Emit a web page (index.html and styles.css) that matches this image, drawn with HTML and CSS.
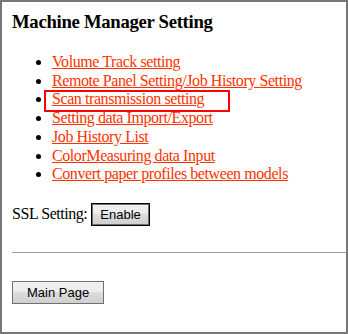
FILE: index.html
```html
<!DOCTYPE html>
<html lang="en">
<head>
  <meta charset="UTF-8">
  <title>Machine Manager Setting</title>
  <link rel="stylesheet" href="styles.css">
</head>
<body>

  <div class="frame">
    <h2>Machine Manager Setting</h2>

    <ul class="menu">
      <li><a href="#">Volume Track setting</a></li>
      <li><a href="#">Remote Panel Setting/Job History Setting</a></li>
      <li class="marked"><a href="#">Scan transmission setting</a><span class="mark"></span></li>
      <li><a href="#">Setting data Import/Export</a></li>
      <li><a href="#">Job History List</a></li>
      <li><a href="#">ColorMeasuring data Input</a></li>
      <li><a href="#">Convert paper profiles between models</a></li>
    </ul>

    <div class="ssl-row">
      <span class="ssl-label">SSL Setting:</span> <button class="btn btn-default">Enable</button>
    </div>

    <hr class="divider">

    <button class="btn">Main Page</button>
  </div>

</body>
</html>
```

FILE: styles.css
```css
body {
  margin: 0;
  font-family: 'Liberation Serif', 'Times New Roman', serif;
  font-size: 16px;
  color: #000;
  background: #fff;
}

.frame {
  box-sizing: border-box;
  height: 334px;
  border: 2px solid #777;
  padding-left: 10px;
  overflow: hidden;
}

h2 {
  font-size: 18.72px;
  font-weight: bold;
  letter-spacing: -0.3px;
  margin: 9px 0 0;
}

.menu {
  margin: 20px 0 18px;
  padding-left: 40px;
  line-height: 18.7px;
}

.menu li {
  position: relative;
}

.menu a {
  color: #ff3300;
  text-decoration: underline;
  letter-spacing: -0.42px;
}

/* red highlight frame around the selected entry */
.mark {
  position: absolute;
  left: -8px;
  top: 0;
  width: 186px;
  height: 22px;
  border: 2px solid #ff0000;
  box-sizing: border-box;
}

.ssl-row {
  height: 24px;
  line-height: 24px;
}

.ssl-label {
  letter-spacing: -0.45px;
}

.btn {
  font-family: 'Liberation Sans', Arial, sans-serif;
  font-size: 13px;
  color: #000;
  height: 23px;
  padding: 0 14px;
  border: 1px solid #707070;
  border-radius: 0;
  background: linear-gradient(#f2f2f2, #ebebeb 50%, #dddddd 50%, #cfcfcf);
  vertical-align: top;
  margin: 1px 0 0;
}

.btn-default {
  padding: 0 8px;
  border-color: #000;
  box-shadow: inset 0 0 0 1px #707070;
}

.divider {
  margin: 26px 0 27px;
  border: 0;
  border-top: 1px solid #a0a0a0;
  height: 0;
}
```
